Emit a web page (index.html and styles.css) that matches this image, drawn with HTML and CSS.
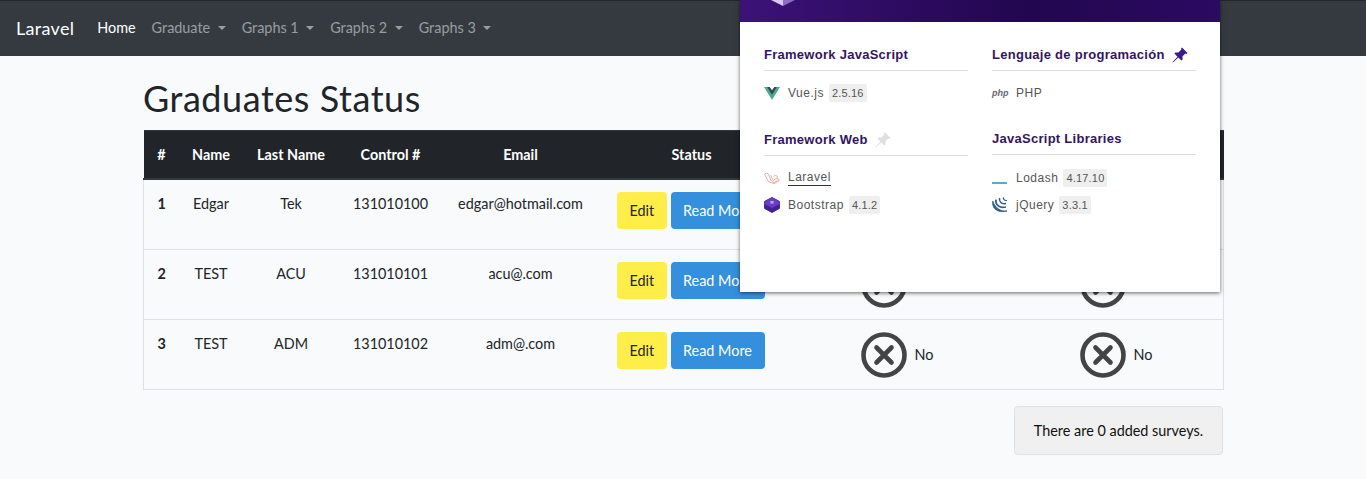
FILE: index.html
```html
<!DOCTYPE html>
<html lang="en">
<head>
    <meta charset="UTF-8">
    <meta name="viewport" content="width=device-width, initial-scale=1.0">
    <title>Graduates Status</title>
    <link rel="stylesheet" href="styles.css">
</head>
<body>
    <svg class="icon-defs" width="0" height="0" aria-hidden="true">
        <symbol id="no-icon" viewBox="0 0 46 46">
            <circle cx="23" cy="23" r="20.5" fill="none" stroke="#444" stroke-width="4.6"/>
            <path d="M15.5 15.5 L30.5 30.5 M30.5 15.5 L15.5 30.5" fill="none" stroke="#444" stroke-width="4.6" stroke-linecap="round"/>
        </symbol>
        <symbol id="pin-icon" viewBox="0 0 16 16">
            <path d="M10 0.5 L15.5 6 L14.4 7 L13.4 6.6 L10.4 9.6 L10.6 12.6 L9.4 13.6 L6.3 10.5 L1 15.5 L0.5 15 L5.5 9.7 L2.4 6.6 L3.4 5.4 L6.4 5.6 L9.4 2.6 L9 1.6 Z"/>
        </symbol>
    </svg>

    <nav class="navbar">
        <a class="brand" href="#">Laravel</a>
        <ul class="nav-links">
            <li><a class="nav-link active" href="#">Home</a></li>
            <li><a class="nav-link dropdown" href="#">Graduate</a></li>
            <li><a class="nav-link dropdown" href="#">Graphs 1</a></li>
            <li><a class="nav-link dropdown" href="#">Graphs 2</a></li>
            <li><a class="nav-link dropdown" href="#">Graphs 3</a></li>
        </ul>
    </nav>

    <main class="content">
        <h1>Graduates Status</h1>

        <table class="status-table">
            <colgroup>
                <col class="col-id">
                <col class="col-name">
                <col class="col-last">
                <col class="col-control">
                <col class="col-email">
                <col class="col-status">
                <col class="col-first-check">
                <col class="col-second-check">
            </colgroup>
            <thead>
                <tr>
                    <th>#</th>
                    <th>Name</th>
                    <th>Last Name</th>
                    <th>Control #</th>
                    <th>Email</th>
                    <th>Status</th>
                    <th>Survey 1</th>
                    <th>Survey 2</th>
                </tr>
            </thead>
            <tbody>
                <tr>
                    <th>1</th>
                    <td>Edgar</td>
                    <td>Tek</td>
                    <td>131010100</td>
                    <td>edgar@hotmail.com</td>
                    <td class="actions"><a class="btn btn-edit" href="#">Edit</a><a class="btn btn-more" href="#">Read More</a></td>
                    <td class="check first-check"><div class="check-box"><svg class="no-icon"><use href="#no-icon"/></svg><span>No</span></div></td>
                    <td class="check second-check"><div class="check-box"><svg class="no-icon"><use href="#no-icon"/></svg><span>No</span></div></td>
                </tr>
                <tr>
                    <th>2</th>
                    <td>TEST</td>
                    <td>ACU</td>
                    <td>131010101</td>
                    <td>acu@.com</td>
                    <td class="actions"><a class="btn btn-edit" href="#">Edit</a><a class="btn btn-more" href="#">Read More</a></td>
                    <td class="check first-check"><div class="check-box"><svg class="no-icon"><use href="#no-icon"/></svg><span>No</span></div></td>
                    <td class="check second-check"><div class="check-box"><svg class="no-icon"><use href="#no-icon"/></svg><span>No</span></div></td>
                </tr>
                <tr>
                    <th>3</th>
                    <td>TEST</td>
                    <td>ADM</td>
                    <td>131010102</td>
                    <td>adm@.com</td>
                    <td class="actions"><a class="btn btn-edit" href="#">Edit</a><a class="btn btn-more" href="#">Read More</a></td>
                    <td class="check first-check"><div class="check-box"><svg class="no-icon"><use href="#no-icon"/></svg><span>No</span></div></td>
                    <td class="check second-check"><div class="check-box"><svg class="no-icon"><use href="#no-icon"/></svg><span>No</span></div></td>
                </tr>
            </tbody>
        </table>

        <div class="survey-row">
            <div class="survey-count">There are 0 added surveys.</div>
        </div>
    </main>

    <!-- browser extension popup, sits over the page -->
    <aside class="popup">
        <div class="popup-header">
            <svg class="popup-logo" width="24" height="14" viewBox="0 0 24 14"><path d="M12 0 L24 0 L12 6 Z" fill="#8f6cc4"/><path d="M0 0 L12 0 L12 6 Z" fill="#d9c6f2"/></svg>
        </div>
        <div class="popup-body">
            <div class="popup-col">
                <section class="category">
                    <h2 class="category-title">Framework JavaScript</h2>
                    <ul class="tech-list">
                        <li class="tech">
                            <svg class="tech-icon" viewBox="0 0 16 16"><path d="M0 2 H5.6 L8 5.6 L10.4 2 H16 L8 15 Z" fill="#4fa98a"/><path d="M3.2 2 H5.6 L8 5.6 L10.4 2 H12.8 L8 9.8 Z" fill="#2f4858"/></svg>
                            <span>Vue.js</span><span class="version">2.5.16</span>
                        </li>
                    </ul>
                </section>
                <section class="category">
                    <h2 class="category-title">Framework Web
                        <svg class="pin pin-off"><use href="#pin-icon"/></svg>
                    </h2>
                    <ul class="tech-list">
                        <li class="tech">
                            <svg class="tech-icon" viewBox="0 0 16 16" fill="none" stroke="#eab0a8" stroke-width="1"><path d="M0.5 4 L2.4 3 L4.4 4 L7.4 11 L10 12.6 L15.4 9.6 L13 8.4 L9 10.4 L6.6 5 M0.5 4 L4.4 11.6 L10 13.6 L15.4 10.6 M9.4 6.4 L11.4 5.4 L13.4 6.4 L13 8.4"/></svg>
                            <a class="tech-link" href="#">Laravel</a>
                        </li>
                        <li class="tech">
                            <svg class="tech-icon" viewBox="0 0 16 16"><path d="M8 0.5 L15.4 4.4 V11.4 L8 15.5 L0.6 11.4 V4.4 Z" fill="#41209a" stroke="#41209a" stroke-linejoin="round"/><path d="M8 0.5 L15.4 4.4 V7 L8 11 L0.6 7 V4.4 Z" fill="#6a3cc0"/><path d="M6.4 4 H9.6 V6.6 H6.4 Z" fill="#b9a3e6"/></svg>
                            <span>Bootstrap</span><span class="version">4.1.2</span>
                        </li>
                    </ul>
                </section>
            </div>
            <div class="popup-col">
                <section class="category">
                    <h2 class="category-title">Lenguaje de programación
                        <svg class="pin"><use href="#pin-icon"/></svg>
                    </h2>
                    <ul class="tech-list">
                        <li class="tech">
                            <span class="tech-icon php-mark">php</span>
                            <span>PHP</span>
                        </li>
                    </ul>
                </section>
                <section class="category category-tight">
                    <h2 class="category-title">JavaScript Libraries</h2>
                    <ul class="tech-list">
                        <li class="tech">
                            <svg class="tech-icon" viewBox="0 0 16 16"><path d="M0 12 H15 V14 H0 Z" fill="#5fa9c0"/></svg>
                            <span>Lodash</span><span class="version">4.17.10</span>
                        </li>
                        <li class="tech">
                            <svg class="tech-icon" viewBox="0 0 16 16" fill="none" stroke="#2f5f8a"><path d="M0.8 4 C-0.4 10 4 16.6 15 14 C8.6 14.6 3 11 0.8 4 Z" fill="#2f5f8a" stroke-width="0.8"/><path d="M4 2.6 C3 7 7 11.6 14 10" stroke-width="1.7"/><path d="M7.6 1 C6.8 4 9 7.6 14 6.6" stroke-width="1.5"/><path d="M11.6 0.4 C11 2 12 3.8 15 3.6" stroke-width="1.2"/></svg>
                            <span>jQuery</span><span class="version">3.3.1</span>
                        </li>
                    </ul>
                </section>
            </div>
        </div>
    </aside>
</body>
</html>
```

FILE: styles.css
```css
:root {
    --page-color: #f8fafb;
    --nav-color: #343a40;
    --head-color: #212529;
    --line-color: #dee2e6;
    --popup-purple: #35155f;
}

* {
    box-sizing: border-box;
}

body {
    font-family: 'Lato', 'Open Sans', sans-serif;
    font-size: 14.4px;
    line-height: 1.6;
    margin: 0;
    background-color: var(--page-color);
    color: #212529;
    position: relative;
    overflow: hidden;
    height: 479px;
}

a {
    text-decoration: none;
}

ul {
    list-style: none;
    margin: 0;
    padding: 0;
}

.icon-defs {
    position: absolute;
}

/* navbar */
.navbar {
    display: flex;
    align-items: center;
    height: 56px;
    padding: 0 16px;
    background-color: var(--nav-color);
    border-top: 1px solid #23272b;
}

.brand {
    color: #fff;
    font-size: 18px;
    letter-spacing: 0.3px;
    margin-right: 15px;
}

.nav-links {
    display: flex;
    margin-top: -1px;
}

.nav-link {
    display: block;
    padding: 8px 8px;
    color: rgba(255, 255, 255, 0.5);
}

.nav-link.active {
    color: #fff;
}

.dropdown::after {
    content: "";
    display: inline-block;
    margin-left: 7.5px;
    vertical-align: 3px;
    border-top: 4.3px solid;
    border-left: 4.3px solid transparent;
    border-right: 4.3px solid transparent;
}

/* page content */
.content {
    width: 1080px;
    margin-left: 143px;
    padding-top: 21px;
}

h1 {
    font-size: 36px;
    font-weight: 400;
    line-height: 1.2;
    letter-spacing: 0.55px;
    margin: 0 0 10px;
}

.status-table {
    width: 1080px;
    table-layout: fixed;
    border-collapse: collapse;
    margin-bottom: 16px;
}

.col-id { width: 36px; }
.col-name { width: 63px; }
.col-last { width: 97px; }
.col-control { width: 102px; }
.col-email { width: 158px; }
.col-status { width: 184px; }
.col-first-check { width: 233px; }
.col-second-check { width: 207px; }

.status-table th,
.status-table td {
    padding: 12px 0;
    text-align: center;
    vertical-align: top;
    border: 1px solid var(--line-color);
    border-width: 1px 0;
}

.status-table tbody tr {
    height: 70px;
}

.status-table tbody tr > :first-child {
    border-left-width: 1px;
}

.status-table tbody tr > :last-child {
    border-right-width: 1px;
}

.status-table thead th {
    background-color: var(--head-color);
    color: #fff;
    border-color: #32383e;
    border-bottom-width: 2px;
}

.status-table .actions {
    text-align: left;
    padding: 12px 0 0 17px;
    white-space: nowrap;
}

.btn {
    display: inline-block;
    padding: 6px 12px;
    border: 1px solid transparent;
    border-radius: 4px;
}

.btn-edit {
    width: 50px;
    text-align: center;
    background-color: #ffed4a;
    color: #212529;
    margin-right: 4px;
}

.btn-more {
    width: 94px;
    padding: 6px 0;
    text-align: center;
    background-color: #3490dc;
    color: #fff;
}

.status-table .check {
    text-align: left;
    padding: 12px 0 0;
}

.status-table .first-check {
    padding-left: 77px;
}

.status-table .second-check {
    padding-left: 63px;
}

.check-box {
    display: flex;
    align-items: center;
    gap: 8px;
}

.no-icon {
    width: 46px;
    height: 46px;
}

.survey-row {
    display: flex;
    justify-content: flex-end;
}

.survey-count {
    width: 209px;
    padding: 12px 0;
    text-align: center;
    white-space: nowrap;
    background-color: #f0f0f0;
    border: 1px solid #e2e2e2;
    border-radius: 4px;
    color: #111;
}

/* popup */
.popup {
    position: absolute;
    top: 0;
    left: 740px;
    width: 480px;
    height: 292px;
    background-color: #fff;
    box-shadow: 0 1px 4px rgba(0, 0, 0, 0.6);
    font-family: 'Liberation Sans', Arial, sans-serif;
    font-size: 12px;
    line-height: 16px;
}

.popup-header {
    height: 22px;
    padding-left: 31px;
    background: linear-gradient(90deg, #3c1278, #22064f 60%, #2b0a62);
}

.popup-logo {
    display: block;
}

.popup-body {
    display: grid;
    grid-template-columns: 204px 204px;
    column-gap: 24px;
    padding: 24px;
}

.category {
    margin-bottom: 25px;
}

.category-tight {
    margin-top: -1px;
}

.category-tight .tech-list {
    padding-top: 9px;
}

.category-title {
    display: flex;
    align-items: center;
    gap: 7px;
    margin: 0;
    height: 25px;
    padding: 1px 0 7px;
    font-size: 13px;
    font-weight: 700;
    letter-spacing: 0.27px;
    color: var(--popup-purple);
    border-bottom: 1px solid #dcdce0;
}

.pin {
    width: 16px;
    height: 16px;
    fill: #3a1a8e;
}

.pin-off {
    fill: #dfdfe2;
}

.tech-list {
    padding-top: 8px;
}

.tech {
    display: flex;
    align-items: center;
    height: 27px;
    color: #555;
    letter-spacing: 0.5px;
}

.tech-icon {
    width: 16px;
    height: 16px;
    margin-right: 8px;
    flex: none;
}

.php-mark {
    font-size: 9px;
    font-weight: 700;
    font-style: italic;
    letter-spacing: 0;
    color: #667;
}

.tech-link {
    color: #555;
    border-bottom: 1px solid #333;
}

.version {
    margin-left: 5px;
    padding: 1px 3px;
    border-radius: 2px;
    background-color: #efefef;
    font-size: 11px;
    letter-spacing: 0.2px;
}
```
